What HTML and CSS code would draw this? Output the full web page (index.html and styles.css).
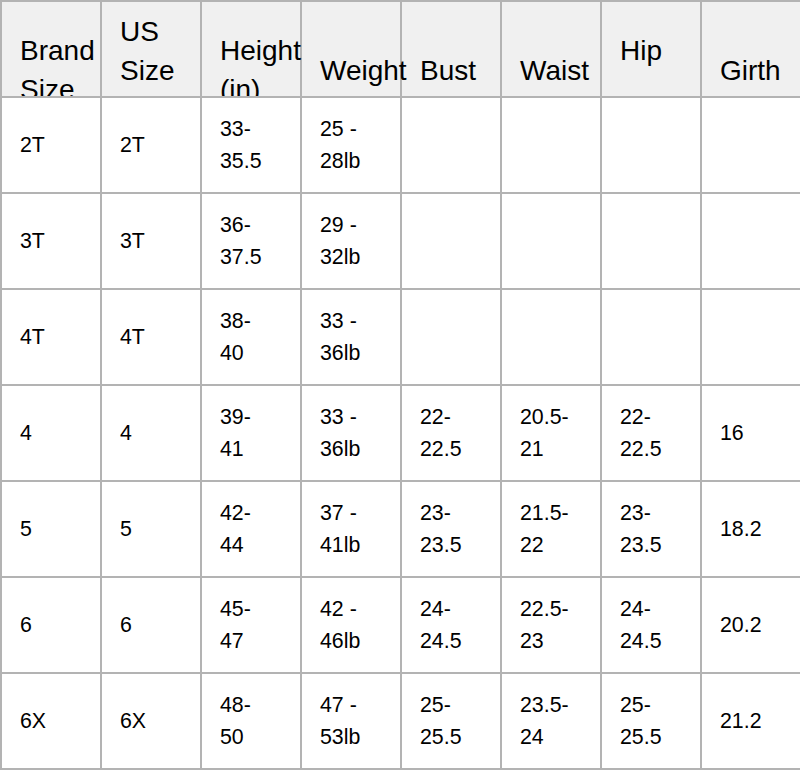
FILE: index.html
```html
<!DOCTYPE html>
<html lang="en">
<head>
<meta charset="utf-8">
<title>Size Chart</title>
<link rel="stylesheet" href="styles.css">
</head>
<body>
<div class="frame">
<table class="chart">
  <thead>
    <tr>
      <th><div class="hcell hm">Brand Size</div></th>
      <th><div class="hcell hb">US Size</div></th>
      <th><div class="hcell hm">Height (in)</div></th>
      <th><div class="hcell hb">Weight</div></th>
      <th><div class="hcell hb">Bust</div></th>
      <th><div class="hcell hb">Waist</div></th>
      <th><div class="hcell hm">Hip</div></th>
      <th><div class="hcell hb">Girth</div></th>
    </tr>
  </thead>
  <tbody>
    <tr><td>2T</td><td>2T</td><td>33-35.5</td><td>25 - 28lb</td><td></td><td></td><td></td><td></td></tr>
    <tr><td>3T</td><td>3T</td><td>36-37.5</td><td>29 - 32lb</td><td></td><td></td><td></td><td></td></tr>
    <tr><td>4T</td><td>4T</td><td>38-40</td><td>33 - 36lb</td><td></td><td></td><td></td><td></td></tr>
    <tr><td>4</td><td>4</td><td>39-41</td><td>33 - 36lb</td><td>22-22.5</td><td>20.5-21</td><td>22-22.5</td><td>16</td></tr>
    <tr><td>5</td><td>5</td><td>42-44</td><td>37 - 41lb</td><td>23-23.5</td><td>21.5-22</td><td>23-23.5</td><td>18.2</td></tr>
    <tr><td>6</td><td>6</td><td>45-47</td><td>42 - 46lb</td><td>24-24.5</td><td>22.5-23</td><td>24-24.5</td><td>20.2</td></tr>
    <tr><td>6X</td><td>6X</td><td>48-50</td><td>47 - 53lb</td><td>25-25.5</td><td>23.5-24</td><td>25-25.5</td><td>21.2</td></tr>
  </tbody>
</table>
</div>
</body>
</html>
```

FILE: styles.css
```css
html, body {
  margin: 0;
  padding: 0;
  background: #ffffff;
}

.frame {
  width: 800px;
  overflow: hidden;
}

.chart {
  border-collapse: separate;
  border-spacing: 0;
  table-layout: fixed;
  width: 802px;
  border-top: 2px solid #b3b3b3;
  border-left: 2px solid #b3b3b3;
  font-family: "Liberation Sans", Arial, sans-serif;
  color: #000;
}

.chart th,
.chart td {
  width: 50px;
  padding: 0 30px 0 18px;
  border-right: 2px solid #b3b3b3;
  border-bottom: 2px solid #b3b3b3;
  text-align: left;
}

.chart th {
  height: 94px;
  background: #f0f0f0;
  font-weight: normal;
  font-size: 28px;
  line-height: 1.4;
  vertical-align: top;
}

.chart td {
  height: 94px;
  background: #ffffff;
  font-size: 21.33px;
  line-height: 32px;
  vertical-align: middle;
}

.hcell {
  height: 94px;
  box-sizing: border-box;
  overflow-x: visible;
  overflow-y: clip;
}

.hb {
  display: flex;
  flex-direction: column;
  justify-content: flex-end;
  padding-bottom: 5.5px;
}

.hm {
  padding-top: 29px;
}
```
